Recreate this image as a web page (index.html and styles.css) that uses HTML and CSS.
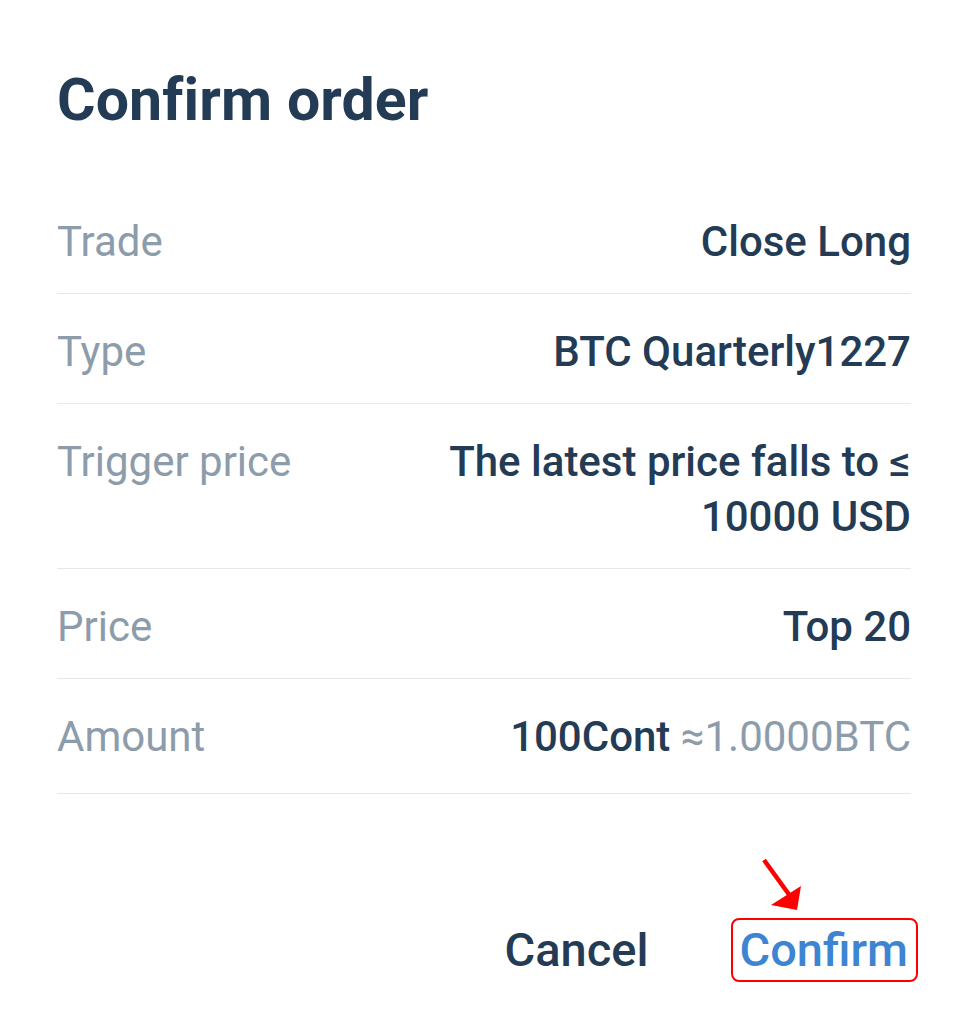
FILE: index.html
```html
<!DOCTYPE html>
<html lang="en">
<head>
<meta charset="utf-8">
<title>Confirm order</title>
<link rel="stylesheet" href="styles.css">
</head>
<body>
<div class="dialog">
  <h1 class="title">Confirm order</h1>
  <div class="rows">
    <div class="row">
      <div class="label">Trade</div>
      <div class="value">Close Long</div>
    </div>
    <div class="row">
      <div class="label">Type</div>
      <div class="value">BTC Quarterly1227</div>
    </div>
    <div class="row">
      <div class="label">Trigger price</div>
      <div class="value wrap">The latest price falls to ≤ 10000 USD</div>
    </div>
    <div class="row">
      <div class="label">Price</div>
      <div class="value">Top 20</div>
    </div>
    <div class="row last">
      <div class="label">Amount</div>
      <div class="value">100Cont <span class="approx">≈1.0000BTC</span></div>
    </div>
  </div>
  <div class="actions">
    <button class="btn cancel">Cancel</button>
    <div class="confirm-wrap">
      <svg class="arrow" width="50" height="60" viewBox="0 0 50 60">
        <line x1="5" y1="4" x2="34" y2="44" stroke="#f00" stroke-width="4.5"/>
        <polygon points="12,49 42,30 38,54" fill="#f00"/>
      </svg>
      <button class="btn confirm">Confirm</button>
    </div>
  </div>
</div>
</body>
</html>
```

FILE: styles.css
```css
* { box-sizing: border-box; }
html, body { margin: 0; padding: 0; background: #fff; }
body {
  font-family: Roboto, "Noto Sans", Arial, sans-serif;
  color: #243b55;
}
.dialog {
  padding: 62px 57px 0 57px;
  width: 968px;
}
.title {
  margin: 0;
  font-size: 59px;
  font-weight: 700;
  line-height: 76px;
  color: #243b55;
  letter-spacing: 0.1px;
}
.rows {
  margin-top: 46px;
}
.row {
  display: flex;
  justify-content: space-between;
  align-items: flex-start;
  padding: 30px 0 24px;
  border-bottom: 1px solid #e6e8ea;
  font-size: 42px;
  line-height: 55px;
}
.row.last { padding-bottom: 29px; }
.label {
  color: #8d9cab;
  font-weight: 400;
  white-space: nowrap;
}
.value {
  font-weight: 500;
  text-align: right;
  color: #243b55;
}
.value.wrap { max-width: 470px; }
.approx {
  font-weight: 400;
  color: #8d9cab;
}
.actions {
  display: flex;
  justify-content: flex-end;
  align-items: center;
  gap: 81px;
  margin-top: 124px;
  margin-right: -7px;
}
.btn {
  font-family: inherit;
  font-size: 47px;
  font-weight: 500;
  background: none;
  border: 2px solid transparent;
  border-radius: 8px;
  padding: 0 8px 0 6px;
  height: 64px;
  line-height: 58px;
  cursor: pointer;
}
.cancel { color: #243b55; padding: 0; }
.confirm-wrap { position: relative; }
.confirm {
  color: #3d85d3;
  border-color: #f00;
}
.arrow {
  position: absolute;
  left: 28px;
  top: -62px;
}
```
